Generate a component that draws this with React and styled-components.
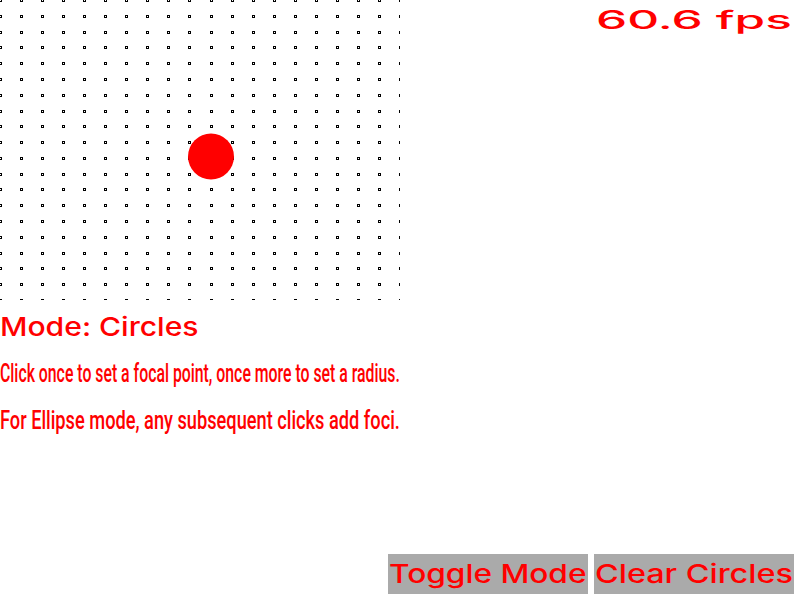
import React, { useLayoutEffect, useRef, useState } from "react";
import styled, { createGlobalStyle } from "styled-components";

const GlobalStyle = createGlobalStyle`
  html, body { margin: 0; padding: 0; background: #ffffff; }
  body { font-family: "DejaVu Sans", sans-serif; color: #ff0000; }
`;

const Page = styled.div`
  width: 800px;
  height: 600px;
  display: grid;
  grid-template-rows: 1fr auto;
  overflow: hidden;
`;

const Top = styled.div`
  display: flex;
  justify-content: space-between;
  align-items: flex-start;
`;

const LeftColumn = styled.div`
  width: 400px;
  display: flex;
  flex-direction: column;
`;

const Canvas = styled.svg`
  display: block;
  width: 400px;
  height: 300px;
`;

const Title = styled.div`
  margin-top: 12px;
  font-family: Inter, "DejaVu Sans", sans-serif;
  font-weight: 500;
  font-size: 26px;
  line-height: 30px;
  color: #ff0000;
`;

const HelpLine = styled.div`
  margin-top: 17px;
  font-family: Roboto, "Liberation Sans", sans-serif;
  font-weight: 500;
  font-size: 25px;
  line-height: 30px;
  color: #ff0000;
`;

const Fps = styled.div`
  padding-top: 5px;
  padding-right: 8px;
  font-family: Inter, "DejaVu Sans", sans-serif;
  font-weight: 500;
  font-size: 25px;
  line-height: 30px;
  color: #ff0000;
`;

const ButtonBar = styled.div`
  display: flex;
  justify-content: flex-end;
  gap: 6px;
  padding: 0 6px 6px 0;
`;

const Button = styled.button`
  width: 200px;
  height: 40px;
  padding: 0 0 0 1px;
  margin: 0;
  border: none;
  background: #aaaaaa;
  color: #ff0000;
  font-family: Inter, "DejaVu Sans", sans-serif;
  font-weight: 500;
  font-size: 26px;
  line-height: 40px;
  text-align: left;
  cursor: pointer;
`;

const FitBox = styled.span`
  display: block;
  width: ${(p) => p.$w}px;
  white-space: nowrap;
`;

const FitInner = styled.span`
  display: inline-block;
  transform-origin: left center;
`;

function FitText({ width, children }) {
  const ref = useRef(null);
  const [scale, setScale] = useState(1);
  useLayoutEffect(() => {
    const measure = () => {
      if (!ref.current) return;
      const w = ref.current.offsetWidth;
      if (w) setScale(width / w);
    };
    measure();
    if (document.fonts && document.fonts.ready) document.fonts.ready.then(measure);
  }, [width, children]);
  return (
    <FitBox $w={width}>
      <FitInner ref={ref} style={{ transform: `scaleX(${scale})` }}>
        {children}
      </FitInner>
    </FitBox>
  );
}

function DotGrid() {
  const dots = [];
  for (let i = 0; i < 20; i++) {
    for (let j = 0; j < 20; j++) {
      const x = Math.round((i * 400) / 19);
      const y = Math.round((j * 300) / 19);
      dots.push(
        <g key={`${i}-${j}`}>
          <rect x={x - 1} y={y - 1} width={3} height={3} fill="#000" />
          <rect x={x} y={y} width={1} height={1} fill="#fff" />
        </g>
      );
    }
  }
  return (
    <Canvas viewBox="0 0 400 300" shapeRendering="crispEdges">
      {dots}
      <circle cx={211} cy={156.5} r={23} fill="#ff0000" shapeRendering="auto" />
    </Canvas>
  );
}

export default function App() {
  return (
    <>
      <GlobalStyle />
      <Page>
        <Top>
          <LeftColumn>
            <DotGrid />
            <Title>
              <FitText width={199}>Mode: Circles</FitText>
            </Title>
            <HelpLine>
              <FitText width={400}>Click once to set a focal point, once more to set a radius.</FitText>
            </HelpLine>
            <HelpLine>
              <FitText width={400}>For Ellipse mode, any subsequent clicks add foci.</FitText>
            </HelpLine>
          </LeftColumn>
          <Fps>
            <FitText width={196}>60.6 fps</FitText>
          </Fps>
        </Top>
        <ButtonBar>
          <Button>
            <FitText width={197}>Toggle Mode</FitText>
          </Button>
          <Button>
            <FitText width={198}>Clear Circles</FitText>
          </Button>
        </ButtonBar>
      </Page>
    </>
  );
}
